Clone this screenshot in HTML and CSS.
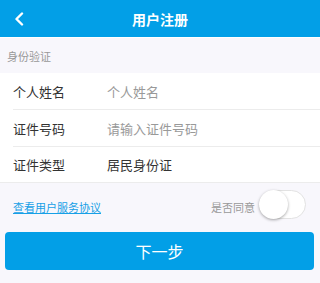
FILE: index.html
```html
<!DOCTYPE html>
<html>
<head>
<meta charset="utf-8">
<link rel="stylesheet" href="styles.css">
</head>
<body>
<div class="header">
  <svg class="back" width="10" height="14" viewBox="0 0 10 14"><path d="M8 1.5 L2.5 7 L8 12.5" fill="none" stroke="#fff" stroke-width="2.4" stroke-linecap="round" stroke-linejoin="round"/></svg>
  <div class="title">用户注册</div>
</div>
<div class="section">身份验证</div>
<div class="form">
  <div class="row"><span class="label">个人姓名</span><span class="value placeholder">个人姓名</span></div>
  <div class="row"><span class="label">证件号码</span><span class="value placeholder">请输入证件号码</span></div>
  <div class="row"><span class="label">证件类型</span><span class="value">居民身份证</span></div>
</div>
<div class="agree">
  <a class="link" href="#">查看用户服务协议</a>
  <div class="consent"><span class="ask">是否同意</span><div class="switch"><div class="knob"></div></div></div>
</div>
<div class="btnwrap"><div class="btn">下一步</div></div>
</body>
</html>
```
FILE: styles.css
```css
* { box-sizing: border-box; }
html, body { margin: 0; padding: 0; }
body {
  width: 320px; height: 283px; overflow: hidden;
  background: #f8f7fc;
  font-family: "Noto Sans CJK SC", "Noto Sans", sans-serif;
}
.header {
  height: 37px; background: #029fe7; position: relative;
  display: flex; align-items: center; justify-content: center;
  border-bottom: 1px solid #fff;
  box-sizing: content-box;
}
.back { position: absolute; left: 14px; top: 12px; }
.title { color: #fff; font-size: 14px; font-weight: bold; line-height: 1; }
.section {
  height: 35px; padding-left: 7px; display: flex; align-items: center;
  font-size: 11px; color: #999; background: #f8f7fc;
}
.form { background: #fff; padding-left: 13px; border-bottom: 1px solid #ececec; }
.row {
  height: 37px; display: flex; align-items: center;
  border-bottom: 1px solid #ececec;
  font-size: 13px; color: #333;
}
.row:last-child { border-bottom: none; height: 35px; }
.label { width: 94px; }
.placeholder { color: #999; }
.agree {
  height: 47px; padding: 0 14px 0 13px;
  display: flex; align-items: center; justify-content: space-between;
}
.link { color: #17a0e6; font-size: 11px; text-decoration: underline; }
.consent { display: flex; align-items: center; margin-top: -5px; }
.ask { color: #999; font-size: 11px; margin-right: 4px; margin-top: 5px; }
.switch {
  width: 47px; height: 29px; border-radius: 15px; background: #fff;
  border: 1px solid #e2e2e2; position: relative;
}
.knob {
  position: absolute; left: -1px; top: -1px; width: 29px; height: 29px;
  border-radius: 50%; background: #fff;
  box-shadow: 0 1px 3px rgba(0,0,0,0.35);
}
.btnwrap { padding: 2px 6px 0 5px; }
.btn {
  height: 38px; background: #029fe7; border-radius: 4px;
  color: #fff; font-size: 16px; display: flex; align-items: center; justify-content: center;
}
```
